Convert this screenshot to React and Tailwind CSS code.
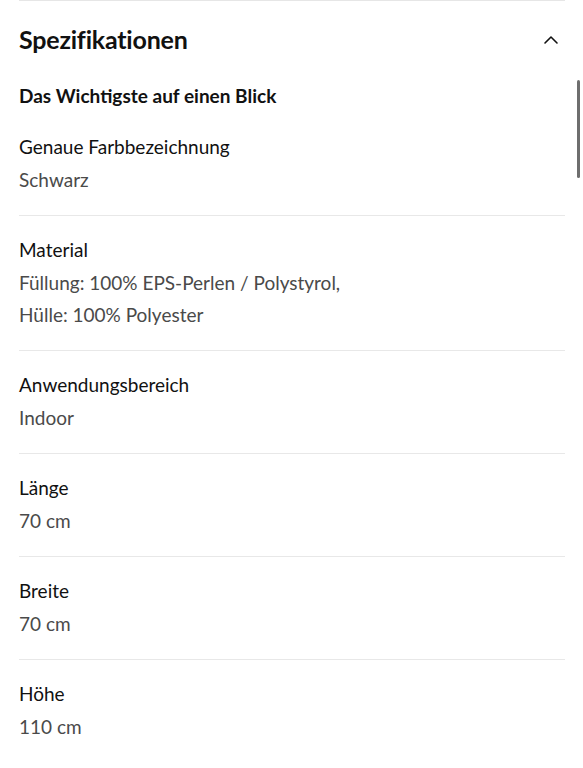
import { ChevronUp } from "lucide-react";

const specs = [
  { label: "Genaue Farbbezeichnung", value: ["Schwarz"] },
  { label: "Material", value: ["Füllung: 100% EPS-Perlen / Polystyrol,", "Hülle: 100% Polyester"] },
  { label: "Anwendungsbereich", value: ["Indoor"] },
  { label: "Länge", value: ["70 cm"] },
  { label: "Breite", value: ["70 cm"] },
  { label: "Höhe", value: ["110 cm"] },
];

export default function App() {
  return (
    <div className="relative min-h-screen bg-white text-[#111] overflow-hidden" style={{ fontFamily: "Lato, 'Noto Sans', sans-serif" }}>
      <div className="absolute right-[3px] top-[80px] h-[98px] w-[3px] rounded-full bg-[#6e6e6e]" />
      <div className="px-[19px] pr-[18px]">
        <div className="h-px bg-[#e6e6e6]" />
        <div className="flex items-center justify-between h-[80px] pb-[2px]">
          <h2 className="text-[25px] font-bold tracking-[-0.2px]">Spezifikationen</h2>
          <ChevronUp className="w-6 h-6 mr-[2px]" strokeWidth={1.6} />
        </div>
        <h3 className="text-[19px] font-bold leading-[32px] -mt-[1px]">Das Wichtigste auf einen Blick</h3>
        <div className="mt-[2px]">
          {specs.map((s, i) => (
            <div key={i} className={`${i === 0 ? "pt-[16px]" : "pt-[17px] border-t border-[#e8e8e8]"} pb-[19px]`}>
              <p className="text-[19px] leading-[34px]">{s.label}</p>
              {s.value.map((v, j) => (
                <p key={j} className="text-[19px] leading-[32px] text-[#4a4a4a]">{v}</p>
              ))}
            </div>
          ))}
        </div>
      </div>
    </div>
  );
}
